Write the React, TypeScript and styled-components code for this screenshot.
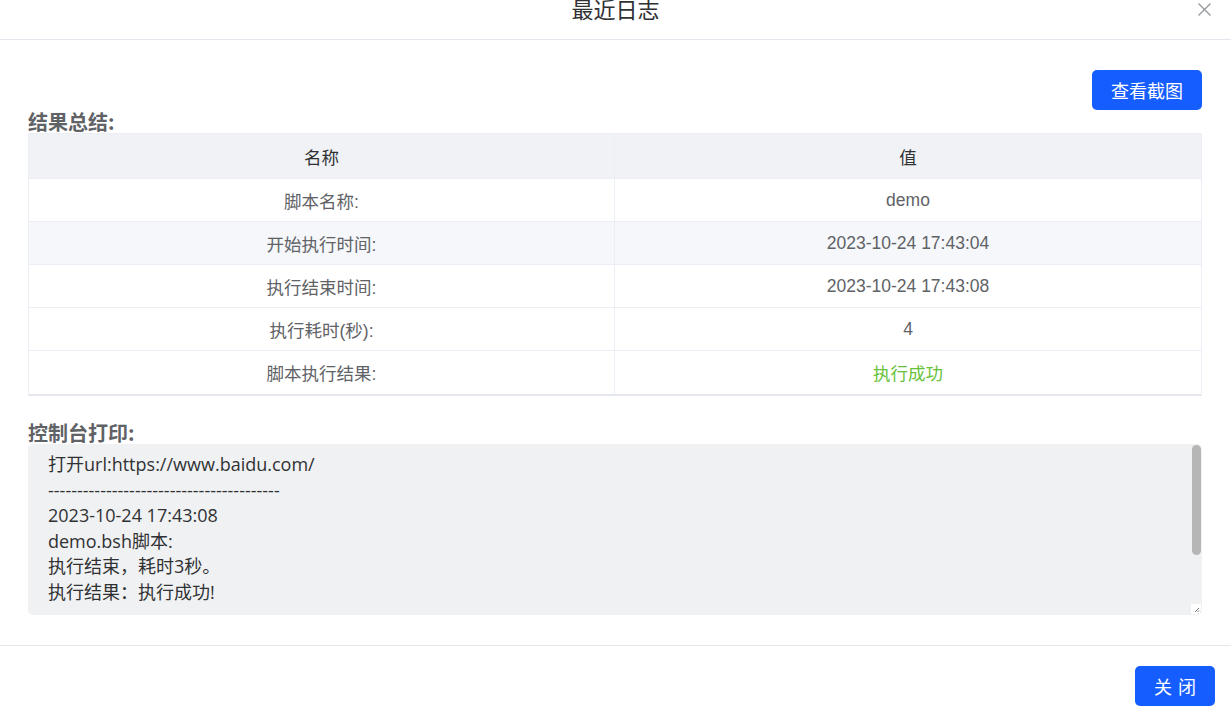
import { createGlobalStyle, styled } from 'styled-components'

const GlobalStyle = createGlobalStyle`
  html, body {
    margin: 0;
    padding: 0;
    background: #ffffff;
    font-family: "Liberation Sans", "Noto Sans CJK SC", sans-serif;
    overflow: hidden;
  }
`;

const Dialog = styled.div`
  width: 1231px;
  height: 716px;
  display: flex;
  flex-direction: column;
  background: #fff;
`;

const Header = styled.div`
  height: 39px;
  border-bottom: 1px solid #e4e7ed;
  display: flex;
  justify-content: center;
  position: relative;
`;

const Title = styled.div`
  margin-top: -4px;
  font-family: "Noto Sans CJK SC", sans-serif;
  font-size: 22px;
  line-height: 24px;
  color: #303133;
`;

const CloseX = styled.button`
  position: absolute;
  right: 19px;
  top: 3px;
  width: 14px;
  height: 14px;
  padding: 0;
  border: none;
  background: none;
  cursor: pointer;
  display: flex;
`;

const Body = styled.div`
  height: 606px;
  box-sizing: border-box;
  padding: 30px 29px 0 28px;
  display: flex;
  flex-direction: column;
  border-bottom: 1px solid #e4e7ed;
`;

const TopRow = styled.div`
  display: flex;
  justify-content: flex-end;
`;

const Button = styled.button<{ $w: number }>`
  width: ${p => p.$w}px;
  height: 40px;
  border: none;
  border-radius: 5px;
  background: #165dff;
  color: #fff;
  font-family: "Noto Sans CJK SC", sans-serif;
  font-size: 18px;
  letter-spacing: ${p => (p.$w < 100 ? '6px' : '0')};
  text-indent: ${p => (p.$w < 100 ? '6px' : '0')};
  cursor: pointer;
`;

const Label = styled.div<{ $top: number }>`
  margin-top: ${p => p.$top}px;
  font-family: "Noto Sans CJK SC", sans-serif;
  font-size: 20px;
  font-weight: 700;
  color: #606266;
  line-height: 23px;
`;

const Table = styled.div`
  border: 1px solid #ebeef5;
  border-bottom: 2px solid #e4e7ed;
  display: grid;
  grid-template-columns: 586px 1fr;
`;

const Cell = styled.div<{ $head?: boolean; $stripe?: boolean; $ok?: boolean; $last?: boolean }>`
  height: ${p => (p.$head ? 45 : 43)}px;
  display: flex;
  align-items: center;
  justify-content: center;
  font-size: 17.5px;
  color: ${p => (p.$ok ? '#67c23a' : p.$head ? '#303133' : '#606266')};
  background: ${p => (p.$head ? '#f0f2f5' : p.$stripe ? '#f5f7fa' : '#fff')};
  border-bottom: ${p => (p.$last ? 'none' : '1px solid #ebeef5')};
  border-right: 1px solid #ebeef5;
  box-sizing: border-box;
  &:nth-child(2n) {
    border-right: none;
  }
`;

const ConsoleWrap = styled.div`
  position: relative;
  height: 171px;
`;

const Console = styled.textarea`
  width: 100%;
  height: 100%;
  box-sizing: border-box;
  border: none;
  border-radius: 5px;
  background: #f0f1f3;
  padding: 8px 20px;
  font-family: "Open Sans", "Noto Sans CJK SC", sans-serif;
  font-size: 18px;
  line-height: 25.5px;
  color: #303133;
  outline: none;
  resize: vertical;
  overflow: hidden;
  display: block;
`;

const Thumb = styled.div`
  position: absolute;
  right: 1px;
  top: 1px;
  width: 9px;
  height: 110px;
  border-radius: 5px;
  background: #b6b6b6;
  pointer-events: none;
`;

const Corner = styled.div`
  position: absolute;
  right: 1px;
  bottom: 1px;
  width: 10px;
  height: 10px;
  background: #fff;
  border-radius: 0 0 4px 0;
  pointer-events: none;
  display: flex;
`;

const Footer = styled.div`
  display: flex;
  justify-content: flex-end;
  padding: 20px 16px 0 0;
`;

const rows = [
  { name: '脚本名称:', value: 'demo' },
  { name: '开始执行时间:', value: '2023-10-24 17:43:04' },
  { name: '执行结束时间:', value: '2023-10-24 17:43:08' },
  { name: '执行耗时(秒):', value: '4' },
  { name: '脚本执行结果:', value: '执行成功', ok: true },
];

const log = [
  '打开url:https://www.baidu.com/',
  '----------------------------------------',
  '2023-10-24 17:43:08',
  'demo.bsh脚本:',
  '执行结束，耗时3秒。',
  '执行结果：执行成功!',
  '',
  '',
  '',
  '',
].join('\n');

const App = () => {
  return (
    <Dialog>
      <GlobalStyle />
      <Header>
        <Title>最近日志</Title>
        <CloseX aria-label="close">
          <svg width="13" height="13" viewBox="0 0 13 13">
            <path d="M0.5 0.5 L12.5 12.5 M12.5 0.5 L0.5 12.5" stroke="#909399" strokeWidth="1.2" />
          </svg>
        </CloseX>
      </Header>
      <Body>
        <TopRow>
          <Button $w={110}>查看截图</Button>
        </TopRow>
        <Label $top={0}>结果总结:</Label>
        <Table>
          <Cell $head>名称</Cell>
          <Cell $head>值</Cell>
          {rows.map((r, i) => [
            <Cell key={r.name} $stripe={i === 1} $last={i === rows.length - 1}>{r.name}</Cell>,
            <Cell key={r.value} $stripe={i === 1} $ok={r.ok} $last={i === rows.length - 1}>{r.value}</Cell>,
          ])}
        </Table>
        <Label $top={25}>控制台打印:</Label>
        <ConsoleWrap>
          <Console readOnly value={log} />
          <Thumb />
          <Corner>
            <svg width="10" height="10" viewBox="0 0 10 10">
              <path d="M8 4 L4 8 M8 6.5 L6.5 8" stroke="#555" strokeWidth="0.8" />
            </svg>
          </Corner>
        </ConsoleWrap>
      </Body>
      <Footer>
        <Button $w={80}>关闭</Button>
      </Footer>
    </Dialog>
  );
};

export default App;
